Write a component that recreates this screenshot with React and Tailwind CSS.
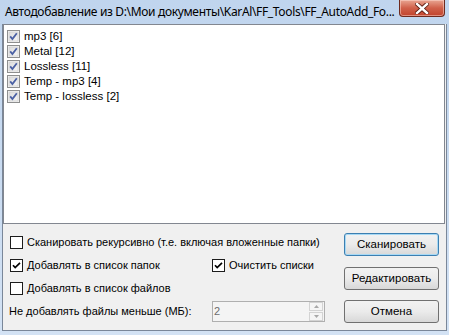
import React from 'react';

const font = { fontFamily: '"Liberation Sans", Arial, sans-serif' };

const ListCheck = () => (
  <svg width="13" height="13" viewBox="0 0 13 13" className="shrink-0">
    <defs>
      <linearGradient id="lc" x1="0" y1="0" x2="1" y2="1">
        <stop offset="0" stopColor="#dcdcdc" />
        <stop offset="1" stopColor="#f6f6f6" />
      </linearGradient>
    </defs>
    <rect x="0.5" y="0.5" width="12" height="12" fill="#f4f4f4" stroke="#8e8f8f" />
    <rect x="2" y="2" width="9" height="9" fill="url(#lc)" stroke="#c9c9c9" strokeWidth="0.6" />
    <path d="M3.2 6.4 L5.4 9 L9.8 3.2" fill="none" stroke="#4b61a4" strokeWidth="1.8" />
  </svg>
);

const FlatCheck = ({ checked }) => (
  <svg width="13" height="13" viewBox="0 0 13 13" className="shrink-0">
    <rect x="0.5" y="0.5" width="12" height="12" fill="#fff" stroke="#1c1c1c" />
    {checked && <path d="M3 6.2 L5.2 8.6 L10 3.8" fill="none" stroke="#000" strokeWidth="1.7" />}
  </svg>
);

const Button = ({ children, focused }) => (
  <div
    className={`h-[23px] w-[95px] rounded-[3px] border flex items-center justify-center text-[11.5px] text-black ${
      focused ? 'border-[#3c7fb1] shadow-[inset_0_0_0_1px_#a7d9f5]' : 'border-[#707070]'
    } bg-gradient-to-b from-[#f2f2f2] via-[#ebebeb] to-[#d8d8d8]`}
  >
    {children}
  </div>
);

const items = ['mp3 [6]', 'Metal [12]', 'Lossless [11]', 'Temp - mp3 [4]', 'Temp - lossless [2]'];

export default function App() {
  return (
    <div className="w-[449px] h-[335px] overflow-hidden flex flex-col bg-gradient-to-b from-[#c0d5ee] to-[#d3e2f4]" style={font}>
      <div className="h-[24px] relative shrink-0">
        <div className="pl-[5px] pt-[3px] text-[12px] text-black whitespace-nowrap" style={{ fontFamily: '"Noto Sans", "Open Sans", sans-serif', letterSpacing: '-0.34px' }}>
          Автодобавление из D:\Мои документы\KarAl\FF_Tools\FF_AutoAdd_Fo...
        </div>
        <div className="absolute left-[399px] top-0 w-[46px] h-[17px] rounded-b-[4px] border border-t-0 border-[#6e2a1e] bg-gradient-to-b from-[#e8a592] via-[#d0604a] to-[#c1432c] shadow-[inset_0_0_0_1px_rgba(255,220,210,0.5)] flex items-center justify-center">
          <svg width="14" height="11" viewBox="0 0 14 11">
            <path d="M2 1 L12 10 M12 1 L2 10" stroke="#5a1c12" strokeWidth="4.2" strokeLinecap="square" />
            <path d="M2 1 L12 10 M12 1 L2 10" stroke="#fff" strokeWidth="2.4" strokeLinecap="square" />
          </svg>
        </div>
      </div>
      <div className="ml-[2px] mr-[2px] h-[307px] border-x border-b border-[#7a8799] bg-[#f0f0f0] flex flex-col">
        <div className="h-[200px] mr-[1px] border border-[#828790] bg-white pt-[4px] pl-[3px] flex flex-col shrink-0">
          {items.map((t) => (
            <div key={t} className="h-[15px] flex items-center gap-[4px] text-[11.5px] text-black leading-none whitespace-nowrap">
              <ListCheck />
              <span>{t}</span>
            </div>
          ))}
        </div>
        <div className="flex flex-1">
          <div className="flex-1 pl-[7px] pt-[7px] flex flex-col text-[11px] text-black whitespace-nowrap">
            <div className="h-[23px] flex items-center gap-[4px]">
              <FlatCheck />
              <span>Сканировать рекурсивно (т.е. включая вложенные папки)</span>
            </div>
            <div className="h-[23px] flex items-center">
              <div className="w-[202px] flex items-center gap-[4px]">
                <FlatCheck checked />
                <span>Добавлять в список папок</span>
              </div>
              <div className="flex items-center gap-[4px]">
                <FlatCheck checked />
                <span>Очистить списки</span>
              </div>
            </div>
            <div className="h-[23px] flex items-center gap-[4px]">
              <FlatCheck />
              <span>Добавлять в список файлов</span>
            </div>
            <div className="h-[23px] flex items-center">
              <span className="w-[202px] -ml-[1px]">Не добавлять файлы меньше (МБ):</span>
              <div className="ml-[1px] w-[113px] h-[21px] border border-[#afafaf] bg-[#f4f4f4] flex items-center">
                <span className="flex-1 pl-[1px] text-[#6d6d6d]">2</span>
                <div className="w-[14px] h-[19px] flex flex-col gap-[1px] mr-[1px]">
                  <div className="flex-1 border border-[#d3d3d3] bg-[#f5f5f5] flex items-center justify-center">
                    <svg width="5" height="3" viewBox="0 0 5 3"><path d="M0 3 L2.5 0 L5 3 Z" fill="#a8a8a8" /></svg>
                  </div>
                  <div className="flex-1 border border-[#d3d3d3] bg-[#f5f5f5] flex items-center justify-center">
                    <svg width="5" height="3" viewBox="0 0 5 3"><path d="M0 0 L2.5 3 L5 0 Z" fill="#a8a8a8" /></svg>
                  </div>
                </div>
              </div>
            </div>
          </div>
          <div className="w-[95px] mr-[7px] pt-[9px] flex flex-col">
            <Button focused>Сканировать</Button>
            <div className="h-[11px]" />
            <Button>Редактировать</Button>
            <div className="h-[10px]" />
            <Button>Отмена</Button>
          </div>
        </div>
      </div>
    </div>
  );
}
